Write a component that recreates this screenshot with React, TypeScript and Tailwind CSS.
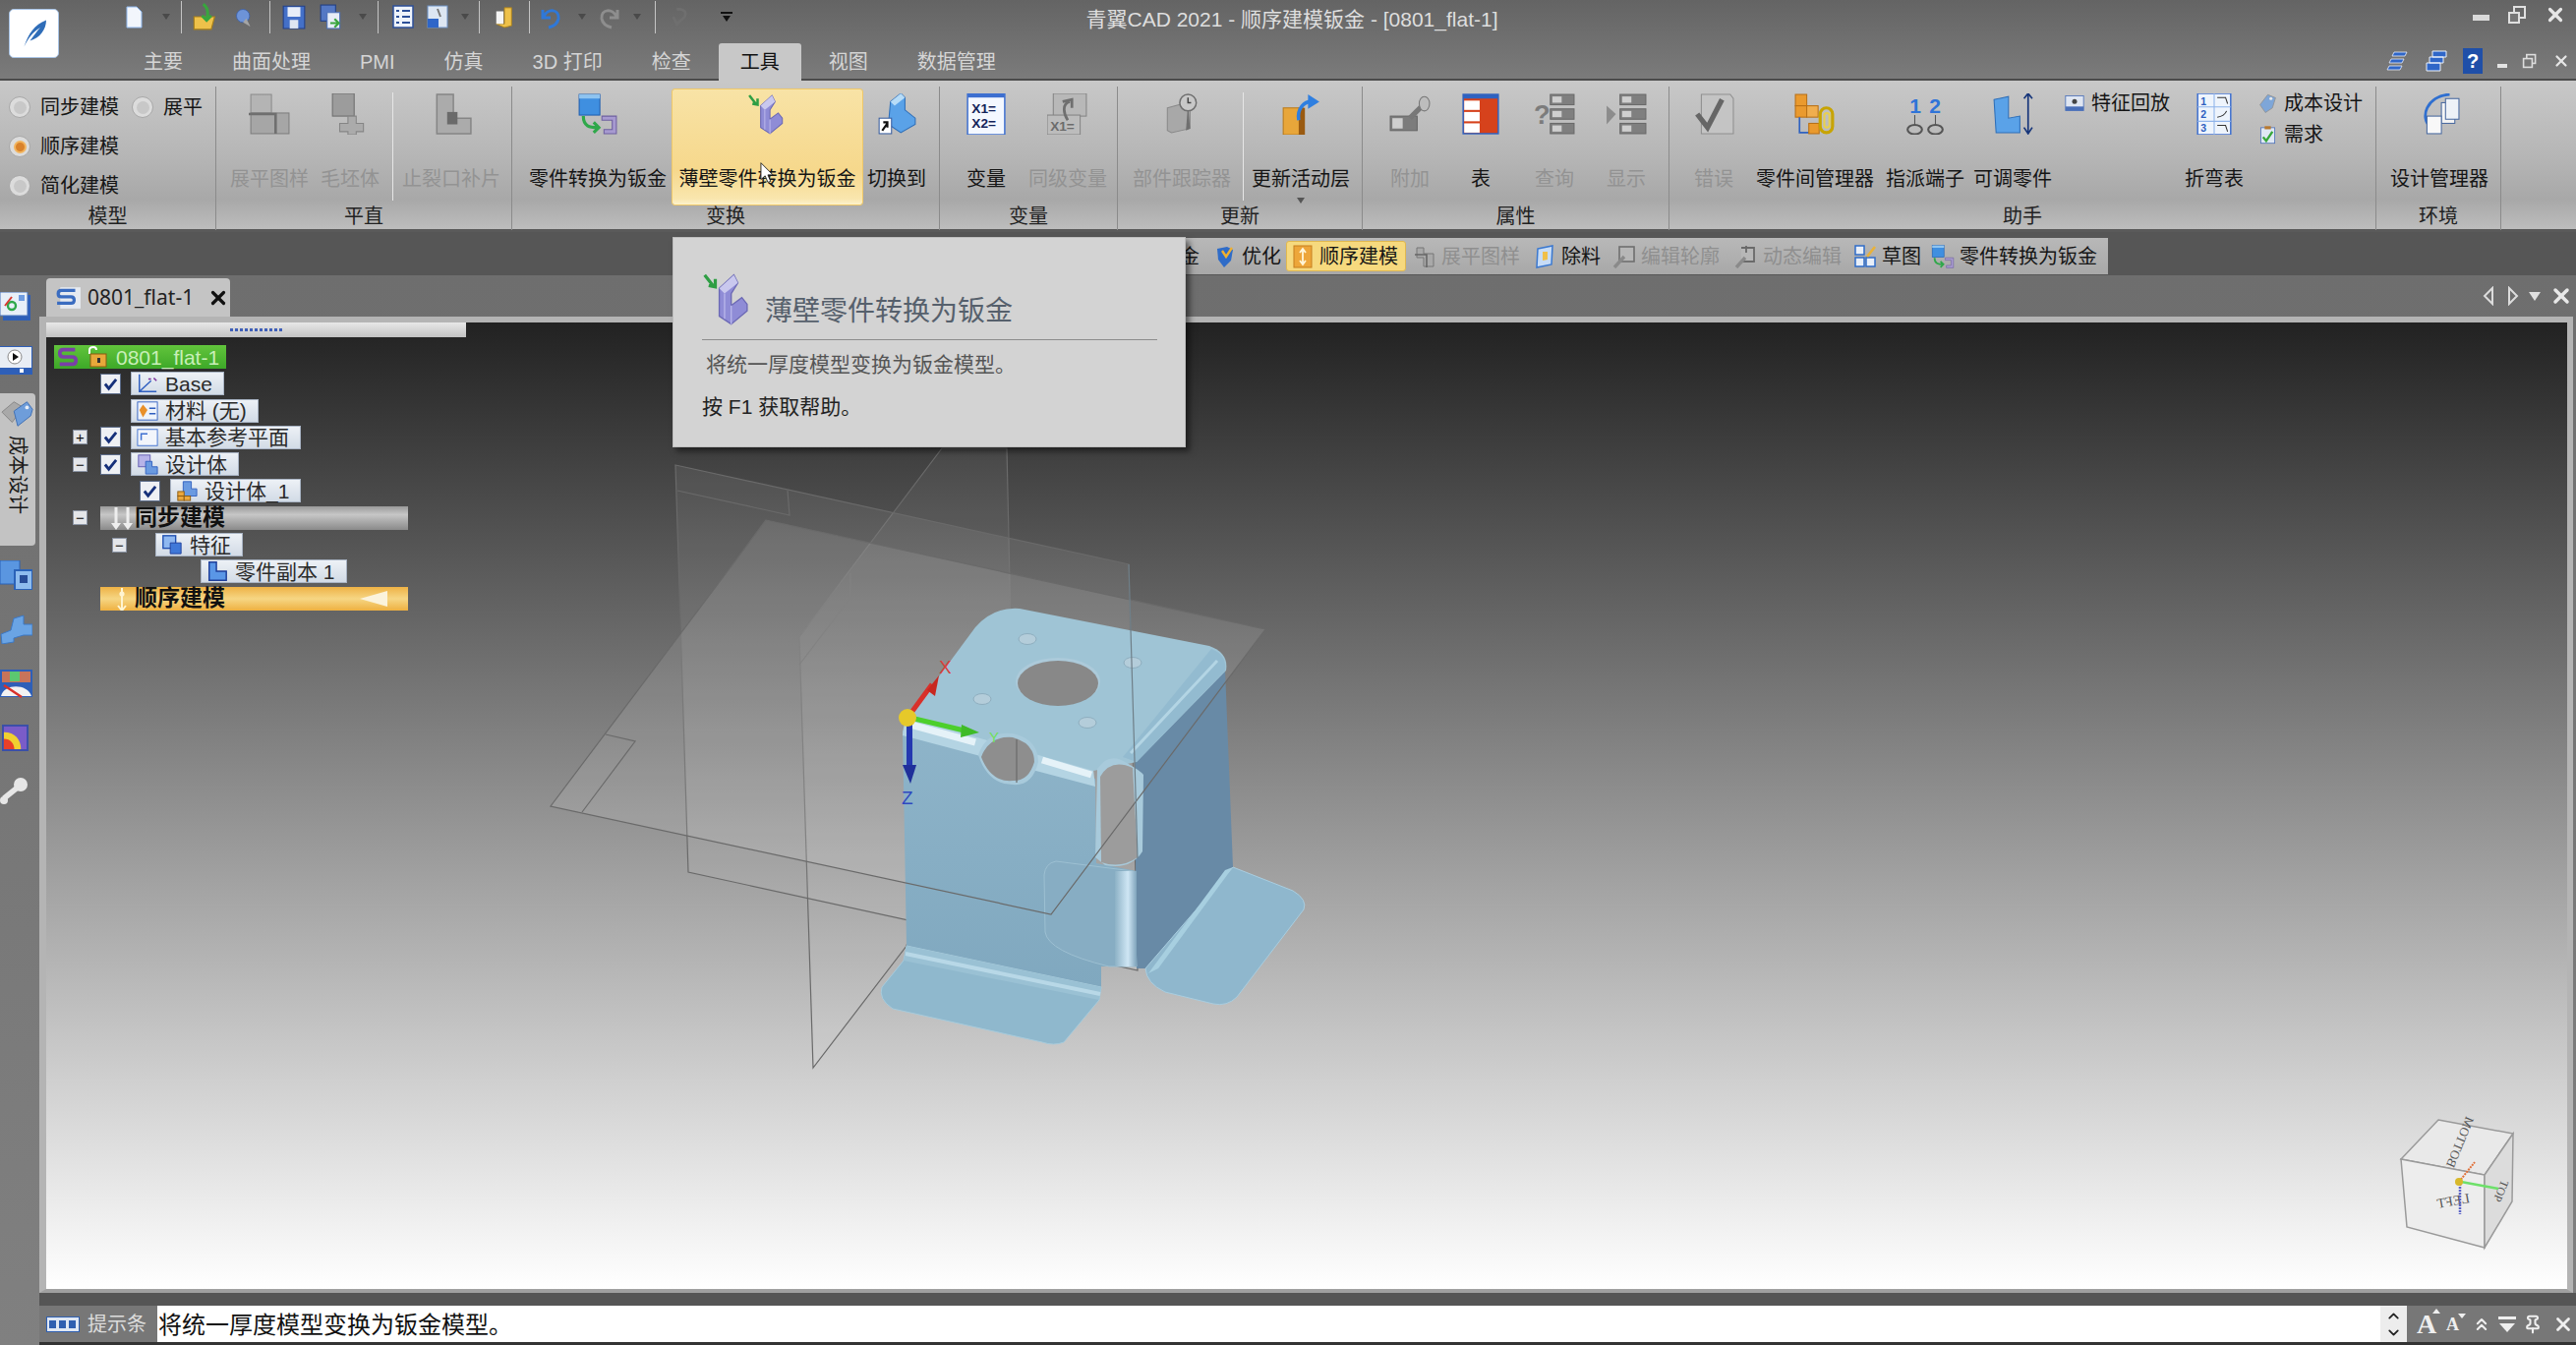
import type { ReactNode } from 'react'
import { ChevronUp, ChevronDown, ChevronsUp, Pin, X } from 'lucide-react'

const Svg = ({ s = 42, children }: { s?: number; children: ReactNode }) => (
  <svg viewBox="0 0 40 40" width={s} height={s} className="shrink-0">{children}</svg>
)

const ThinWall = ({ s = 42 }: { s?: number }) => (
  <Svg s={s}>
    <path d="M2 2 L9 11 M5 10 L10 11 L10 5" stroke="#2f9e44" strokeWidth="2.4" fill="none" />
    <path d="M13 12 L24 2 L27 8 L22 16 L22 25 L30 19 L34 24 L34 29 L22 39 L13 33 Z" fill="#8f8cd6" stroke="#6c69b5" strokeWidth="1" />
    <path d="M13 12 L24 2 L27 8 L17 16 Z" fill="#c9c8ee" />
    <path d="M17 16 L17 35 M22 25 L22 39" stroke="#b8b6ea" strokeWidth="1" />
  </Svg>
)

const PartToSheet = ({ s = 42 }: { s?: number }) => (
  <Svg s={s}>
    <rect x="2" y="1" width="20" height="20" fill="#3f8fe0" stroke="#1f5fb0" />
    <rect x="2" y="1" width="20" height="4" fill="#8fc4f0" />
    <path d="M6 22 C6 32 12 33 20 33 M16 28 L21 33 L16 38" stroke="#2fa84a" strokeWidth="3" fill="none" />
    <path d="M24 22 L38 22 L38 39 L26 39 L26 35 L34 35 L34 26 L24 26 Z" fill="#a79ad0" stroke="#6f60a0" />
  </Svg>
)

const Icons: Record<string, ReactNode> = {
  flat: (
    <Svg>
      <rect x="2" y="1" width="20" height="18" fill="#b4b4b4" stroke="#8c8c8c" />
      <rect x="2" y="19" width="37" height="20" fill="#a6a6a6" stroke="#7e7e7e" />
      <path d="M0 20 L26 20 L26 39" stroke="#6f6f6f" strokeWidth="2.5" fill="none" />
    </Svg>
  ),
  blank: (
    <Svg>
      <rect x="3" y="0" width="21" height="22" fill="#9c9c9c" stroke="#6e6e6e" />
      <path d="M18 22 h8 v7 h7 v8 h-7 v3 h-8 v-3 h-8 v-8 h8 z" fill="#ababab" stroke="#858585" />
    </Svg>
  ),
  relief: (
    <Svg>
      <path d="M6 1 L22 1 L22 24 L39 24 L39 39 L6 39 Z" fill="#ababab" stroke="#858585" strokeWidth="1.4" />
      <rect x="16" y="18" width="10" height="12" fill="#6a6a6a" />
    </Svg>
  ),
  part: <PartToSheet />,
  thin: <ThinWall />,
  switch: (
    <Svg>
      <path d="M14 8 L24 0 L28 4 L28 16 L38 24 L38 30 L24 38 L12 30 Z" fill="#5aa2e8" stroke="#2f6fb8" />
      <path d="M14 8 L24 0 L28 4 L18 12 Z" fill="#b7dcf7" />
      <rect x="3" y="24" width="12" height="15" fill="#fff" stroke="#3a5fa0" />
      <path d="M6 36 L11 29 M7 28 L11 28 L11 33" stroke="#111" strokeWidth="2" fill="none" />
    </Svg>
  ),
  vars: (
    <Svg>
      <rect x="2" y="0" width="36" height="40" fill="#f4f8ff" stroke="#3d6fd0" strokeWidth="1.4" />
      <rect x="2" y="0" width="36" height="4" fill="#3d6fd0" />
      <text x="6" y="19" fontSize="13" fontWeight="700" fill="#14245a" fontFamily="Liberation Sans">X1=</text>
      <text x="6" y="33" fontSize="13" fontWeight="700" fill="#14245a" fontFamily="Liberation Sans">X2=</text>
    </Svg>
  ),
  peer: (
    <Svg>
      <rect x="6" y="0" width="32" height="22" fill="#b8b8b8" stroke="#858585" />
      <rect x="0" y="21" width="32" height="19" fill="#bcbcbc" stroke="#858585" />
      <text x="3" y="36" fontSize="13" fontWeight="700" fill="#6c6c6c" fontFamily="Liberation Sans">X1=</text>
      <path d="M22 8 C14 10 16 20 20 26 M15 8 L24 6 L24 14" stroke="#6f6f6f" strokeWidth="2.6" fill="none" />
    </Svg>
  ),
  tracker: (
    <Svg>
      <path d="M6 14 L28 8 L28 34 L10 38 L6 36 Z" fill="#a8a8a8" stroke="#8a8a8a" />
      <path d="M26 10 L28 34 L24 36 Z" fill="#6f6f6f" />
      <circle cx="26" cy="9" r="8" fill="#c8c8c8" stroke="#6f6f6f" strokeWidth="1.4" />
      <path d="M26 4 V9 H29" stroke="#444" strokeWidth="1.4" fill="none" />
    </Svg>
  ),
  layer: (
    <Svg>
      <path d="M3 14 L22 14 L22 40 L3 40 Z" fill="#e8a63a" stroke="#b97a1a" />
      <rect x="18" y="14" width="6" height="26" fill="#9a5a10" />
      <path d="M18 26 C16 14 24 8 30 8" stroke="#2f7fe0" strokeWidth="3.4" fill="none" />
      <path d="M27 1 L38 8 L27 15 Z" fill="#2f7fe0" />
    </Svg>
  ),
  attach: (
    <Svg>
      <rect x="1" y="22" width="26" height="14" fill="#7c7c7c" stroke="#666" />
      <rect x="3" y="24" width="10" height="10" fill="#cfcfcf" />
      <path d="M20 24 L36 8" stroke="#777" strokeWidth="5" />
      <ellipse cx="34" cy="10" rx="5" ry="7" fill="#bdbdbd" stroke="#777" />
    </Svg>
  ),
  table: (
    <Svg>
      <rect x="3" y="1" width="34" height="38" fill="#d6421c" stroke="#2f62c0" strokeWidth="1.4" />
      <rect x="3" y="1" width="34" height="4" fill="#2f62c0" />
      <rect x="4" y="7" width="15" height="9" fill="#fff" />
      <rect x="4" y="18" width="15" height="9" fill="#fff" />
      <rect x="4" y="29" width="15" height="9" fill="#fff" />
    </Svg>
  ),
  query: (
    <Svg>
      <text x="0" y="30" fontSize="26" fontWeight="700" fill="#7c7c7c" fontFamily="Liberation Sans">?</text>
      {[1, 15, 29].map((y) => (
        <g key={y}>
          <rect x="16" y={y} width="23" height="10" fill="#7f7f7f" stroke="#696969" />
          <rect x="18" y={y + 2} width="9" height="6" fill="#cfcfcf" />
        </g>
      ))}
    </Svg>
  ),
  show: (
    <Svg>
      <path d="M1 12 L10 20 L1 30 Z" fill="#8c8c8c" />
      {[1, 15, 29].map((y) => (
        <g key={y}>
          <rect x="14" y={y} width="25" height="10" fill="#7f7f7f" stroke="#696969" />
          <rect x="16" y={y + 2} width="9" height="6" fill="#cfcfcf" />
        </g>
      ))}
    </Svg>
  ),
  error: (
    <Svg>
      <path d="M8 1 L36 1 L39 5 L39 39 L8 39 Z" fill="#c4c4c4" stroke="#8f8f8f" />
      <path d="M4 20 L14 33 L28 6" stroke="#666" strokeWidth="5" fill="none" />
    </Svg>
  ),
  inter: (
    <Svg>
      <rect x="1" y="1" width="11" height="11" fill="#ea9a2e" stroke="#b87016" />
      <rect x="1" y="12" width="11" height="11" fill="#ea9a2e" stroke="#b87016" />
      <rect x="12" y="12" width="11" height="11" fill="#f0ae4e" stroke="#b87016" />
      <path d="M5 23 V38 H16" stroke="#2f62c0" strokeWidth="1.6" fill="none" />
      <rect x="14" y="29" width="10" height="10" fill="#ea9a2e" stroke="#b87016" />
      <rect x="25" y="14" width="12" height="24" rx="6" fill="none" stroke="#c8a400" strokeWidth="3" />
      <rect x="29" y="19" width="5" height="14" rx="2.5" fill="none" stroke="#e8d050" strokeWidth="2" />
    </Svg>
  ),
  terminal: (
    <Svg>
      <text x="5" y="19" fontSize="20" fontWeight="700" fill="#2f74d8" fontFamily="Liberation Sans">1</text>
      <text x="24" y="19" fontSize="20" fontWeight="700" fill="#2f74d8" fontFamily="Liberation Sans">2</text>
      <path d="M10 21 V31 M30 21 V31" stroke="#555" strokeWidth="1" />
      <ellipse cx="10" cy="35" rx="7" ry="4.5" fill="none" stroke="#555" strokeWidth="2" />
      <ellipse cx="30" cy="35" rx="7" ry="4.5" fill="none" stroke="#555" strokeWidth="2" />
    </Svg>
  ),
  adjust: (
    <Svg>
      <path d="M2 6 L16 3 L16 24 L27 22 L27 38 L4 38 Z" fill="#5aa2e8" stroke="#2f6fb8" />
      <path d="M35 0 V38 M31 5 L35 0 L39 5 M31 33 L35 39 L39 33" stroke="#16357a" strokeWidth="1.6" fill="none" />
    </Svg>
  ),
  bend: (
    <Svg>
      <rect x="4" y="0" width="32" height="40" fill="#eef4fc" stroke="#3d6fd0" strokeWidth="1.4" />
      <path d="M4 13 H36 M4 27 H36 M20 0 V40" stroke="#8fb4ea" />
      <text x="7" y="11" fontSize="10" fontWeight="700" fill="#2f5fc0" fontFamily="Liberation Sans">1</text>
      <text x="7" y="24" fontSize="10" fontWeight="700" fill="#2f5fc0" fontFamily="Liberation Sans">2</text>
      <text x="7" y="37" fontSize="10" fontWeight="700" fill="#2f5fc0" fontFamily="Liberation Sans">3</text>
      <path d="M23 4 H31 L33 10 M23 23 Q30 22 32 17 M23 31 H31 L33 37" stroke="#333" fill="none" />
    </Svg>
  ),
  manager: (
    <Svg>
      <path d="M12 33 C0 24 8 2 30 1" stroke="#2f6fd0" strokeWidth="2.6" fill="none" />
      <rect x="22" y="9" width="13" height="20" fill="#f4f4f4" stroke="#4a6aa0" />
      <rect x="26" y="5" width="13" height="20" fill="#eef2f8" stroke="#4a6aa0" />
      <rect x="8" y="22" width="14" height="17" fill="#f8f8f8" stroke="#4a6aa0" />
    </Svg>
  ),
}

const Btn = ({ label, icon, off, cls, active }: { label: string; icon: string; off?: boolean; cls: string; active?: boolean }) => (
  <div className={`flex flex-col items-center h-[117px] pt-[4px] shrink-0 ${cls} ${active ? 'bg-[linear-gradient(180deg,#f8e3a6_0%,#f6d88c_70%,#f9e6ae_95%,#fdf2cc_100%)] outline outline-1 outline-[#efc869] rounded-[2px]' : ''}`}>
    <div className="h-[42px]">{Icons[icon]}</div>
    <div className={`mt-[31px] h-[28px] leading-[28px] text-[20px] whitespace-nowrap ${off ? 'text-[#939393]' : 'text-[#151515]'}`}>{label}</div>
  </div>
)

const Group = ({ cls, label, children }: { cls: string; label: string; children: ReactNode }) => (
  <div className={`flex flex-col shrink-0 mt-[6px] h-[146px] border-r border-[#8b8b8b] ${cls}`}>
    <div className="flex h-[116px] pt-[3px]">{children}</div>
    <div className="h-[26px] mt-[3px] leading-[26px] text-center text-[20px] text-[#222]">{label}</div>
  </div>
)

const Radio = ({ on }: { on?: boolean }) => (
  <span className="w-[22px] h-[22px] rounded-full bg-[#dcdcdc] border border-[#a8a8a8] flex items-center justify-center shrink-0">
    <span className={`w-[13px] h-[13px] rounded-full ${on ? 'bg-[#d9822b] border-2 border-[#f2b45e]' : 'bg-[#c8c8c8]'}`} />
  </span>
)

const Small = ({ icon, text }: { icon: ReactNode; text: string }) => (
  <div className="flex items-center h-[26px] gap-[7px] text-[20px] text-[#151515] whitespace-nowrap">
    {icon}
    {text}
  </div>
)

const Tool = ({ cls, icon, text, off }: { cls: string; icon: ReactNode; text: string; off?: boolean }) => (
  <div className={`flex items-center gap-[5px] text-[20px] whitespace-nowrap ${cls} ${off ? 'text-[#8f8f8f]' : 'text-[#151515]'}`}>
    <span className="w-[24px] h-[24px] shrink-0">{icon}</span>
    {text}
  </div>
)

const Chk = () => (
  <span className="w-[21px] h-[21px] bg-[#eef0f4] border border-[#5b6b88] flex items-center justify-center shrink-0">
    <svg viewBox="0 0 16 16" width="15" height="15"><path d="M2 8 L6 13 L14 3" stroke="#16307a" strokeWidth="3" fill="none" /></svg>
  </span>
)

const Exp = ({ plus }: { plus?: boolean }) => (
  <span className="w-[15px] h-[15px] bg-[#e4e6ea] border border-[#8a93a3] flex items-center justify-center text-[15px] leading-none text-[#111] shrink-0">
    {plus ? '+' : '−'}
  </span>
)

const TreeIcon = ({ kind }: { kind: string }) => (
  <svg viewBox="0 0 24 24" width="22" height="22" className="shrink-0">
    {kind === 'base' && <path d="M3 2 V21 H22 M3 21 L16 9" stroke="#2f5fc0" strokeWidth="1.6" fill="none" />}
    {kind === 'base' && <path d="M13 7 h3 M19 6 l3 3" stroke="#7a2f9a" strokeWidth="1.6" />}
    {kind === 'mat' && <><rect x="1" y="2" width="22" height="20" fill="#eef3fb" stroke="#2f5fc0" /><path d="M7 5 L12 11 L7 19 L3 11 Z" fill="#e8902a" /><path d="M14 9 h7 M14 15 h7" stroke="#2f5fc0" strokeWidth="1.6" /></>}
    {kind === 'plane' && <><rect x="1" y="3" width="22" height="18" fill="#f2f5fb" stroke="#3d6fd0" /><path d="M5 15 V8 H12" stroke="#3d6fd0" strokeWidth="1.6" fill="none" /></>}
    {kind === 'body' && <><rect x="2" y="2" width="13" height="13" fill="#b7b3e8" stroke="#5f5ab0" /><path d="M10 9 H17 V15 H23 V23 H10 Z" fill="#6a9ae0" stroke="#2f5fc0" /></>}
    {kind === 'body1' && <><path d="M8 2 H17 V10 H23 V18 H8 Z" fill="#6a9ae0" stroke="#2f5fc0" /><rect x="2" y="13" width="7" height="5" fill="#eba83e" stroke="#8a5a10" /><rect x="2" y="18" width="7" height="5" fill="#eba83e" stroke="#8a5a10" /><rect x="9" y="18" width="7" height="5" fill="#eba83e" stroke="#8a5a10" /></>}
    {kind === 'feat' && <><rect x="2" y="2" width="14" height="14" fill="#8fb8f0" stroke="#1f4fb0" strokeWidth="1.5" /><path d="M10 10 H22 V22 H10 Z" fill="#3f78d8" stroke="#1f3f9a" /></>}
    {kind === 'copy' && <path d="M3 2 H11 V12 H22 V22 H3 Z" fill="#5a96e6" stroke="#1f3f9a" strokeWidth="1.6" />}
  </svg>
)

const Label = ({ kind, text }: { kind: string; text: string }) => (
  <span className="flex items-center h-[24px] pl-[5px] pr-[11px] bg-[linear-gradient(180deg,#edf1f6,#d2dbe6)] border border-[#a9b4c4] text-[21px] leading-none text-[#2a2a2a] whitespace-nowrap">
    <span className="w-[29px] shrink-0"><TreeIcon kind={kind} /></span>
    {text}
  </span>
)

const Arrows = ({ fill }: { fill: string }) => (
  <svg viewBox="0 0 24 24" width="24" height="24" className="shrink-0">
    <path d="M12 1 V23 M8 19 L12 24 L16 19" stroke={fill} strokeWidth="2" fill="none" />
    <circle cx="12" cy="7" r="2.6" fill={fill} />
  </svg>
)

const SyncArrows = () => (
  <svg viewBox="0 0 24 24" width="24" height="24" className="shrink-0">
    <path d="M6 1 V19 M18 1 V19" stroke="#eeeeee" strokeWidth="3" />
    <path d="M1 17 L6 24 L11 17 Z M13 17 L18 24 L23 17 Z" fill="#eeeeee" />
  </svg>
)

const Page = ({ c1 = '#f2f6fc', c2 = '#8fb8ee' }: { c1?: string; c2?: string }) => (
  <svg viewBox="0 0 24 24" width="24" height="28">
    <path d="M5 2 H15 L20 7 V23 H5 Z" fill={c1} stroke={c2} />
  </svg>
)

const Qat = ({ cls, children }: { cls: string; children: ReactNode }) => (
  <div className={`shrink-0 h-[34px] flex items-center ${cls}`}>{children}</div>
)

const Sep = ({ cls }: { cls: string }) => <div className={`w-[1px] h-[33px] bg-[#c4c4c4] shrink-0 ${cls}`} />
const Dd = ({ cls }: { cls: string }) => (
  <span className={`w-0 h-0 shrink-0 border-x-[4px] border-x-transparent border-t-[6px] border-t-[#4a4a4a] ${cls}`} />
)

const Floppy = () => (
  <svg viewBox="0 0 24 24" width="26" height="28">
    <path d="M2 2 H22 V23 H2 Z" fill="#4470c8" stroke="#22408a" />
    <rect x="6" y="3" width="12" height="9" fill="#e8eef8" />
    <rect x="8" y="15" width="8" height="8" fill="#dfe6f2" />
  </svg>
)

const Viewport = () => (
  <svg viewBox="47 328 2564 983" className="absolute inset-0 w-full h-full">
    <defs>
      <linearGradient id="bend2" x1="0" y1="0" x2="1" y2="0">
        <stop offset="0" stopColor="#8db2c6" />
        <stop offset="0.6" stopColor="#cfe6f4" />
        <stop offset="1" stopColor="#7fa4bb" />
      </linearGradient>
      <linearGradient id="face" x1="0" y1="0" x2="0" y2="1">
        <stop offset="0" stopColor="#8eb4c9" />
        <stop offset="1" stopColor="#80a8bf" />
      </linearGradient>
    </defs>

    {/* back planes */}
    <path d="M958 456 L1024 456 L1028 640 L1000 680 L922 962 L827 1086 L813 648 Z" fill="rgba(255,255,255,0.05)" stroke="#6a6a6a" strokeWidth="1.2" />
    <path d="M865 583 L865 608 L813 676" fill="none" stroke="#6a6a6a" strokeWidth="1.2" />
    <path d="M687 473 L1148 574 L1157 987 L700 887 Z" fill="rgba(255,255,255,0.07)" stroke="#6a6a6a" strokeWidth="1.2" />
    <path d="M689 499 L803 524 L801 499" fill="none" stroke="#6a6a6a" strokeWidth="1.2" />
    <path d="M779 529 L1287 640 L1069 930 L560 820 Z" fill="rgba(255,255,255,0.1)" />

    {/* part */}
    <path d="M1154 772 L1246 680 L1254 882 L1180 985 L1156 985 Z" fill="#688aa6" />
    <path d="M1254 882 L1315 906 Q1330 915 1326 925 L1258 1014 Q1248 1024 1234 1021 L1185 1009 Q1166 1000 1165 985 Z" fill="#8fb7cd" stroke="#a9cddf" strokeWidth="1" />
    <path d="M1246 885 L1254 882 L1178 985 L1168 990 Z" fill="#a7cfe0" />
    <path d="M918 743 L1114 792 L1115 878 L1156 886 L1156 983 L1120 983 L1120 1004 L922 962 Z" fill="url(#face)" />
    <path d="M922 962 L1120 1004 L1118 1017 L1082 1060 Q1072 1064 1060 1060 L908 1026 Q893 1016 897 1004 L919 977 Z" fill="#8fb8cd" stroke="#a7cbdc" strokeWidth="1" />
    <path d="M922 962 L1120 1004 L1118 1017 L919 977 Z" fill="#9ac1d4" />
    <path d="M921 970 L1119 1011" stroke="#c6e3f0" strokeWidth="4" opacity="0.7" />
    <path d="M918 748 Q919 732 926 730 L1112 783 L1114 800 Z" fill="#b4d4e3" />
    <path d="M926 737 L992 755 M1060 773 L1110 788" stroke="#f2fafe" strokeWidth="7" opacity="0.8" />
    <path d="M924 730 L992 638 Q1010 617 1037 619 L1230 657 Q1250 664 1247 682 L1156 775 L1112 784 Z" fill="#9fc4d5" />
    <path d="M1232 660 Q1248 666 1246 682 L1156 775 L1142 770 Z" fill="#93bbd0" />
    <path d="M1238 672 L1150 766" stroke="#bcdcea" strokeWidth="3" opacity="0.8" />
    <path d="M1074 876 L1152 886 L1156 983 L1128 983 Q1066 968 1063 948 L1062 890 Q1063 878 1074 876 Z" fill="#87adc3" stroke="#9dc0d2" strokeWidth="1" />
    <rect x="1134" y="886" width="22" height="97" fill="url(#bend2)" />
    <path d="M1116 782 Q1128 764 1146 776 Q1160 784 1163 788 L1162 866 Q1150 885 1124 880 L1114 872 Z" fill="#a8cadb" />
    <path d="M1119 790 Q1130 771 1152 781 L1157 872 Q1140 884 1120 877 Z" fill="#9c9c9c" />
    <ellipse cx="1076" cy="693" rx="43" ry="24" fill="#accada" />
    <ellipse cx="1076" cy="695" rx="41" ry="23" fill="#888888" />
    <path d="M995 768 Q1003 743 1030 746 Q1056 752 1056 775 Q1050 800 1030 798 Q1005 798 995 768 Z" fill="#a8cadb" />
    <path d="M998 770 Q1006 748 1030 750 Q1052 756 1052 775 Q1046 795 1030 794 Q1008 796 998 770 Z" fill="#8e8e8e" />
    <path d="M1034 752 V796" stroke="#6a6a6a" strokeWidth="1.2" />
    {[[1045, 650], [1152, 674], [999, 711], [1106, 735]].map(([x, y]) => (
      <ellipse key={x} cx={x} cy={y} rx="9" ry="5.5" fill="#b4cdda" stroke="#8eaebf" />
    ))}

    {/* front plane edges */}
    <path d="M779 529 L1287 640 L1069 930 L560 820 Z" fill="none" stroke="#6a6a6a" strokeWidth="1.2" />
    <path d="M616 747 L646 754 L592 826" fill="none" stroke="#6a6a6a" strokeWidth="1.2" />
    <path d="M1148 574 L1157 873" stroke="#6f7f88" strokeWidth="1.2" />

    {/* triad */}
    <path d="M926 726 L948 696" stroke="#d8302a" strokeWidth="5" />
    <path d="M943 702 L955 687 L951 708 Z" fill="#c82820" />
    <path d="M926 730 L985 744" stroke="#4ccf2c" strokeWidth="5" />
    <path d="M978 737 L996 745 L977 750 Z" fill="#3fbb28" />
    <path d="M925 734 L925 782" stroke="#2438b0" strokeWidth="6" />
    <path d="M918 778 L932 778 L926 797 Z" fill="#1f2f9a" />
    <circle cx="923" cy="730" r="9" fill="#e6c92a" />
    <text x="955" y="685" fontSize="19" fill="#d8403a" fontFamily="Liberation Sans">X</text>
    <text x="1006" y="755" fontSize="15" fill="#6fe05a" fontFamily="Liberation Sans">Y</text>
    <text x="917" y="818" fontSize="19" fill="#2f48c0" fontFamily="Liberation Sans">Z</text>

    {/* view cube */}
    <path d="M2480 1139 L2556 1153 L2527 1195 L2442 1179 Z" fill="#e9e9e9" stroke="#9a9a9a" strokeWidth="1.5" />
    <path d="M2442 1179 L2527 1195 L2527 1269 L2448 1248 Z" fill="#ededed" stroke="#9a9a9a" strokeWidth="1.5" />
    <path d="M2556 1153 L2555 1222 L2527 1269 L2527 1195 Z" fill="#dcdcdc" stroke="#9a9a9a" strokeWidth="1.5" />
    <text transform="translate(2496 1226) scale(-1 1) rotate(10)" fontSize="14" fontFamily="Liberation Serif" fill="#555" textAnchor="middle">LEFT</text>
    <text transform="translate(2498 1160) rotate(112) scale(-1 1)" fontSize="13" fontFamily="Liberation Serif" fill="#555" textAnchor="middle">BOTTOM</text>
    <text transform="translate(2540 1210) rotate(112)" fontSize="12" fontFamily="Liberation Serif" fill="#555" textAnchor="middle">TOP</text>
    <path d="M2501 1202 L2517 1182" stroke="#e0703a" strokeWidth="2" strokeDasharray="2 1" />
    <path d="M2503 1202 L2541 1209" stroke="#6ee06a" strokeWidth="2.5" />
    <path d="M2502 1204 L2502 1235" stroke="#5a62c8" strokeWidth="2.5" strokeDasharray="2 1" />
    <circle cx="2501" cy="1202" r="4" fill="#d8b82a" />
  </svg>
)

export default function App() {
  return (
    <div className="relative w-[2620px] h-[1368px] overflow-hidden flex flex-col bg-[#707070] font-['Liberation_Sans','Noto_Sans_CJK_SC',sans-serif]">

      {/* TITLE + TABS */}
      <div className="relative h-[82px] shrink-0 bg-[linear-gradient(180deg,#646464,#7b7b7b)] border-b-2 border-[#4b4b4b]">
        <div className="flex items-center h-[34px]">
          <Qat cls="ml-[124px] w-[24px]"><Page /></Qat>
          <Dd cls="ml-[17px]" />
          <Sep cls="ml-[11px]" />
          <Qat cls="ml-[10px] w-[28px]">
            <svg viewBox="0 0 24 24" width="28" height="28"><path d="M2 12 H20 L17 23 H2 Z" fill="#eec14a" stroke="#a8801c" /><path d="M10 1 C14 4 15 8 13 14 M9 11 L13 15 L17 11" stroke="#39a53e" strokeWidth="2.6" fill="none" /></svg>
          </Qat>
          <Qat cls="ml-[15px] w-[20px]">
            <svg viewBox="0 0 24 24" width="20" height="26"><circle cx="11" cy="11" r="8" fill="#6d93d8" stroke="#3c60a8" /><path d="M11 19 L20 24 L15 14" fill="#a5a5a5" /></svg>
          </Qat>
          <Sep cls="ml-[16px]" />
          <Qat cls="ml-[11px] w-[26px]"><Floppy /></Qat>
          <Qat cls="ml-[12px] w-[26px]">
            <svg viewBox="0 0 24 24" width="26" height="30"><rect x="2" y="1" width="14" height="15" fill="#5478c4" stroke="#223f85" /><path d="M8 8 H20 V23 H8 Z" fill="#e7edf7" stroke="#4a6fb8" /><path d="M11 18 H18 M15 14 L19 18 L15 22" stroke="#3aa53e" strokeWidth="2" fill="none" /></svg>
          </Qat>
          <Dd cls="ml-[15px]" />
          <Sep cls="ml-[11px]" />
          <Qat cls="ml-[13px] w-[24px]">
            <svg viewBox="0 0 24 24" width="24" height="26"><rect x="2" y="1" width="20" height="22" fill="#eef3fa" stroke="#2c4f98" strokeWidth="1.5" /><path d="M5 6 h3 M11 6 h8 M5 12 h3 M11 12 h8 M5 18 h3 M11 18 h8" stroke="#2c4f98" strokeWidth="2" /></svg>
          </Qat>
          <Qat cls="ml-[11px] w-[26px]">
            <svg viewBox="0 0 24 24" width="24" height="30"><rect x="2" y="1" width="20" height="22" fill="#dde6f2" stroke="#6f93c8" /><rect x="2" y="14" width="11" height="9" fill="#2f66c8" /><path d="M12 4 l3 8" stroke="#777" strokeWidth="2" /></svg>
          </Qat>
          <Dd cls="ml-[10px]" />
          <Sep cls="ml-[10px]" />
          <Qat cls="ml-[14px] w-[22px]">
            <svg viewBox="0 0 24 24" width="22" height="30"><path d="M3 20 H12 V2 H20 V22 L12 24 Z" fill="#eec14a" stroke="#a8801c" /><rect x="3" y="6" width="8" height="14" fill="#f5f5f5" /></svg>
          </Qat>
          <Sep cls="ml-[14px]" />
          <Qat cls="ml-[9px] w-[24px]">
            <svg viewBox="0 0 24 24" width="26" height="30"><path d="M4 5 V13 H12 M5 12 C9 3 21 4 20 14 C19 20 14 22 10 23" stroke="#2f78d8" strokeWidth="3" fill="none" /></svg>
          </Qat>
          <Dd cls="ml-[16px]" />
          <Qat cls="ml-[12px] w-[24px]">
            <svg viewBox="0 0 24 24" width="26" height="30"><path d="M20 5 V13 H12 M19 12 C15 3 3 4 4 14 C5 20 10 22 14 23" stroke="#8e8e8e" strokeWidth="3" fill="none" /></svg>
          </Qat>
          <Dd cls="ml-[12px]" />
          <Sep cls="ml-[14px]" />
          <Qat cls="ml-[14px] w-[22px]">
            <svg viewBox="0 0 24 24" width="22" height="28"><path d="M8 4 C16 2 20 8 16 13 L8 20 M4 12 L9 22" stroke="#6f6f6f" strokeWidth="3" fill="none" /></svg>
          </Qat>
          <div className="ml-[30px] flex flex-col items-center gap-[2px] shrink-0">
            <span className="w-[12px] h-[2px] bg-[#111]" />
            <Dd cls="!border-t-[#111]" />
          </div>
        </div>

        <div className="absolute left-0 right-0 top-0 h-[40px] flex items-center justify-center pl-[8px] text-[21px] text-[#dedede] pointer-events-none whitespace-nowrap">
          青翼CAD 2021 - 顺序建模钣金 - [0801_flat-1]
        </div>

        {/* logo */}
        <div className="absolute left-[9px] top-[9px] w-[51px] h-[50px] rounded-[5px] bg-white border border-[#a9c4e6] flex items-center justify-center">
          <svg viewBox="0 0 24 24" width="36" height="36"><path d="M5 21 C8 12 12 6 20 3 C20 9 16 15 9 17 C12 13 14 10 16 8 C11 11 8 15 5 21 Z" fill="#2f6db8" /></svg>
        </div>

        {/* window buttons */}
        <div className="absolute right-[10px] top-[4px] flex items-center gap-[18px] text-[#e6e6e6]">
          <span className="w-[17px] h-[6px] mt-[6px] bg-[#d9d9d9]" />
          <svg viewBox="0 0 20 20" width="20" height="22"><rect x="7" y="2" width="11" height="11" fill="none" stroke="#e0e0e0" strokeWidth="2" /><rect x="2" y="8" width="10" height="10" fill="#777" stroke="#e0e0e0" strokeWidth="2" /></svg>
          <X size={22} strokeWidth={3.5} />
        </div>

        {/* tabs */}
        <div className="absolute left-[121px] top-[44px] h-[38px] flex text-[20px] leading-[38px] text-[#d5d5d5]">
          {['主要', '曲面处理', 'PMI', '仿真', '3D 打印', '检查'].map((t) => (
            <div key={t} className="px-[25px] whitespace-nowrap">{t}</div>
          ))}
          <div className="mx-[3px] px-[22px] h-[40px] bg-[#c8c8c8] rounded-t-[3px] text-[#111]">工具</div>
          {['视图', '数据管理'].map((t) => (
            <div key={t} className="px-[25px] whitespace-nowrap">{t}</div>
          ))}
        </div>

        <div className="absolute right-[6px] top-[49px] flex items-center gap-[15px]">
          <svg viewBox="0 0 24 24" width="24" height="24"><path d="M8 3 H21 L19 7 H6 Z M5 10 H18 L16 14 H3 Z M3 17 H16 L14 21 H1 Z" fill="#2f66c8" stroke="#e8eefa" strokeWidth="0.8" /></svg>
          <svg viewBox="0 0 24 24" width="24" height="24"><path d="M8 2 H22 V8 H8 Z M5 8 H19 V14 H5 Z M2 14 H16 V22 H2 Z" fill="#2f66c8" stroke="#eef3fb" strokeWidth="1" /></svg>
          <div className="w-[20px] h-[26px] bg-[#1f4fa8] text-white text-[20px] font-bold leading-[26px] text-center">?</div>
          <span className="w-[10px] h-[4px] mt-[10px] bg-[#e4e4e4]" />
          <svg viewBox="0 0 20 20" width="16" height="18"><rect x="6" y="2" width="11" height="11" fill="none" stroke="#ddd" strokeWidth="2" /><rect x="2" y="7" width="11" height="11" fill="#777" stroke="#ddd" strokeWidth="2" /></svg>
          <X size={18} strokeWidth={3} className="text-[#e6e6e6]" />
        </div>
      </div>

      {/* RIBBON */}
      <div className="flex h-[154px] shrink-0 bg-[linear-gradient(180deg,#c8c8c8_0%,#b6b6b6_50%,#a8a8a8_80%,#bdbdbd_100%)] border-b-[3px] border-[#5a5a5a]">
        <Group cls="w-[220px]" label="模型">
          <div className="flex flex-col -mt-[2px] text-[20px] text-[#151515]">
            <div className="flex items-center shrink-0 h-[40px] pl-[9px]"><Radio /><span className="ml-[10px] whitespace-nowrap">同步建模</span><span className="ml-[13px]"><Radio /></span><span className="ml-[10px]">展平</span></div>
            <div className="flex items-center shrink-0 h-[40px] pl-[9px]"><Radio on /><span className="ml-[10px]">顺序建模</span></div>
            <div className="flex items-center shrink-0 h-[40px] pl-[9px]"><Radio /><span className="ml-[10px]">简化建模</span></div>
          </div>
        </Group>
        <Group cls="w-[301px]" label="平直">
          <Btn off label="展平图样" icon="flat" cls="ml-[10px] w-[88px]" />
          <Btn off label="毛坯体" icon="blank" cls="w-[76px]" />
          <div className="w-px h-[110px] ml-[5px] mt-[3px] bg-[#e6e6e6]" />
          <Btn off label="止裂口补片" icon="relief" cls="w-[118px]" />
        </Group>
        <Group cls="w-[435px]" label="变换">
          <Btn label="零件转换为钣金" icon="part" cls="ml-[15px] w-[144px]" />
          <Btn active label="薄壁零件转换为钣金" icon="thin" cls="ml-[4px] w-[193px]" />
          <Btn label="切换到" icon="switch" cls="ml-[5px] w-[60px]" />
        </Group>
        <Group cls="w-[181px]" label="变量">
          <Btn label="变量" icon="vars" cls="ml-[17px] w-[60px]" />
          <Btn off label="同级变量" icon="peer" cls="ml-[11px] w-[84px]" />
        </Group>
        <Group cls="w-[249px]" label="更新">
          <Btn off label="部件跟踪器" icon="tracker" cls="ml-[13px] w-[104px]" />
          <div className="w-px h-[110px] ml-[10px] mt-[3px] bg-[#e6e6e6]" />
          <div className="relative ml-[6px]">
            <Btn label="更新活动层" icon="layer" cls="w-[104px]" />
            <span className="absolute left-[48px] top-[110px] w-0 h-0 border-x-[4px] border-x-transparent border-t-[6px] border-t-[#555]" />
          </div>
        </Group>
        <Group cls="w-[312px]" label="属性">
          <Btn off label="附加" icon="attach" cls="ml-[18px] w-[60px]" />
          <Btn label="表" icon="table" cls="ml-[12px] w-[60px]" />
          <Btn off label="查询" icon="query" cls="ml-[15px] w-[60px]" />
          <Btn off label="显示" icon="show" cls="ml-[13px] w-[60px]" />
        </Group>
        <Group cls="w-[719px]" label="助手">
          <Btn off label="错误" icon="error" cls="ml-[15px] w-[60px]" />
          <Btn label="零件间管理器" icon="inter" cls="ml-[12px] w-[122px]" />
          <Btn label="指派端子" icon="terminal" cls="ml-[10px] w-[82px]" />
          <Btn label="可调零件" icon="adjust" cls="ml-[8px] w-[80px]" />
          <div className="ml-[13px] w-[108px] pt-[1px]">
            <Small
              text="特征回放"
              icon={<svg viewBox="0 0 24 24" width="20" height="24"><rect x="1" y="3" width="22" height="18" fill="#dfe6f2" stroke="#4a6fb8" /><rect x="1" y="16" width="22" height="5" fill="#4a6fb8" /><circle cx="12" cy="10" r="3" fill="#444" /></svg>}
            />
          </div>
          <Btn label="折弯表" icon="bend" cls="ml-[13px] w-[62px]" />
          <div className="ml-[14px] flex flex-col gap-[6px] pt-[1px]">
            <Small
              text="成本设计"
              icon={<svg viewBox="0 0 24 24" width="19" height="26"><path d="M12 1 L22 5 L18 18 L9 24 L2 14 Z" fill="#7ea6d8" stroke="#8f8f8f" /><circle cx="16" cy="6" r="2" fill="#e8e8e8" /></svg>}
            />
            <Small
              text="需求"
              icon={<svg viewBox="0 0 24 24" width="19" height="26"><rect x="3" y="3" width="18" height="20" fill="#dfe8f4" stroke="#4a6fb8" /><rect x="8" y="1" width="8" height="4" fill="#b87a30" /><path d="M6 15 L10 20 L18 8" stroke="#38a83c" strokeWidth="3" fill="none" /></svg>}
            />
          </div>
        </Group>
        <Group cls="w-[127px]" label="环境">
          <Btn label="设计管理器" icon="manager" cls="ml-[12px] w-[104px]" />
        </Group>
      </div>

      {/* SECONDARY TOOLBAR */}
      <div className="h-[44px] shrink-0 bg-[#565656] pt-[6px]">
        <div className="ml-[1100px] w-[1044px] h-[37px] flex items-center bg-[linear-gradient(180deg,#b8b8b8,#a8a8a8)]">
          <div className="w-[120px] text-right text-[20px] text-[#151515]">钣金</div>
          <Tool
            cls="ml-[14px]"
            text="优化"
            icon={<svg viewBox="0 0 24 24" width="24" height="24"><path d="M4 4 L14 2 L20 5 L18 16 L11 23 L5 15 Z" fill="#2f6cc8" /><path d="M9 6 L13 12 L19 3" stroke="#f0b030" strokeWidth="2.4" fill="none" /></svg>}
          />
          <div className="ml-[5px] pl-[4px] pr-[7px] h-[31px] flex items-center bg-[#f6d97e] border border-[#e0b850] rounded-[3px]">
            <Tool
              cls=""
              text="顺序建模"
              icon={<svg viewBox="0 0 24 24" width="24" height="24"><rect x="3" y="1" width="18" height="22" fill="#eda63a" stroke="#c57f1e" /><path d="M12 4 V20 M9 8 L12 4 L15 8 M9 16 L12 20 L15 16" stroke="#fff5d8" strokeWidth="1.8" fill="none" /></svg>}
            />
          </div>
          <Tool
            off
            cls="ml-[7px]"
            text="展平图样"
            icon={<svg viewBox="0 0 24 24" width="24" height="24"><path d="M4 3 H11 V9 H21 V22 H11 V13 H4 Z" fill="#a9a9a9" stroke="#777" /><path d="M2 10 H14 V23" stroke="#666" strokeWidth="1.6" fill="none" /></svg>}
          />
          <Tool
            cls="ml-[13px]"
            text="除料"
            icon={<svg viewBox="0 0 24 24" width="24" height="24"><path d="M5 4 L20 1 L19 20 L4 23 Z" fill="#c7dcf6" stroke="#3a78d0" strokeWidth="1.5" /><path d="M10 7 H15 V15 L10 16 Z" fill="#f0c04a" /></svg>}
          />
          <Tool
            off
            cls="ml-[12px]"
            text="编辑轮廓"
            icon={<svg viewBox="0 0 24 24" width="24" height="24"><rect x="7" y="2" width="15" height="15" fill="#b7b7b7" stroke="#6f6f6f" strokeWidth="1.6" /><path d="M2 23 L12 12" stroke="#8a8a8a" strokeWidth="3.4" /></svg>}
          />
          <Tool
            off
            cls="ml-[15px]"
            text="动态编辑"
            icon={<svg viewBox="0 0 24 24" width="24" height="24"><path d="M7 3 H20 V17 H7 M12 1 V8" fill="#b7b7b7" stroke="#6a6a6a" strokeWidth="1.8" /><path d="M2 23 L11 13" stroke="#8a8a8a" strokeWidth="3.4" /></svg>}
          />
          <Tool
            cls="ml-[12px]"
            text="草图"
            icon={<svg viewBox="0 0 24 24" width="24" height="24"><rect x="2" y="1" width="9" height="9" fill="#e8eff9" stroke="#2f6cc8" strokeWidth="1.5" /><rect x="2" y="13" width="9" height="9" fill="#e8eff9" stroke="#2f6cc8" strokeWidth="1.5" /><rect x="13" y="13" width="9" height="9" fill="#e8eff9" stroke="#2f6cc8" strokeWidth="1.5" /><path d="M14 12 L22 2" stroke="#e9b23a" strokeWidth="2.6" /></svg>}
          />
          <Tool cls="ml-[10px]" text="零件转换为钣金" icon={<PartToSheet s={24} />} />
        </div>
      </div>

      {/* MAIN */}
      <div className="flex flex-1 min-h-0 bg-[linear-gradient(180deg,#6e6e6e,#808080)]">

        {/* LEFT STRIP */}
        <div className="w-[40px] shrink-0 flex flex-col items-start pt-[17px]">
          <svg viewBox="0 0 32 30" width="32" height="30"><rect x="3" y="3" width="28" height="26" fill="#2e5fb8" /><rect x="0" y="0" width="28" height="24" fill="#e8eff8" stroke="#4a74bc" /><circle cx="12" cy="14" r="4" fill="none" stroke="#2fa84a" strokeWidth="2.4" /><path d="M5 14 L12 5" stroke="#d83a30" strokeWidth="2" /><rect x="19" y="3" width="6" height="6" fill="#6f9ce0" /></svg>
          <div className="mt-[25px]">
            <svg viewBox="0 0 33 30" width="33" height="30"><rect x="0" y="0" width="33" height="29" fill="#2e5fb8" /><rect x="0" y="1" width="32" height="21" fill="#e8edf4" /><circle cx="15" cy="11" r="7" fill="#fff" stroke="#888" /><path d="M13 7 L19 11 L13 15 Z" fill="#111" /><rect x="20" y="23" width="4" height="4" fill="#fff" /></svg>
          </div>
          <div className="mt-[18px] w-[36px] h-[155px] bg-[#c3c3c3] rounded-r-[4px] flex flex-col items-center pt-[6px]">
            <svg viewBox="0 0 36 30" width="34" height="30"><path d="M1 13 L14 2 L24 8 L12 24 Z" fill="#a9a9a9" stroke="#868686" /><path d="M14 12 L28 2 L34 10 L32 17 L18 28 Z" fill="#6e9dda" stroke="#3f6eb4" /><circle cx="28" cy="8" r="2" fill="#e8eef8" /></svg>
            <div className="mt-[7px] [writing-mode:vertical-rl] [text-orientation:sideways] text-[20px] leading-none text-[#1a1a1a]">成本设计</div>
          </div>
          <div className="mt-[15px]">
            <svg viewBox="0 0 33 30" width="33" height="30"><rect x="0" y="0" width="20" height="24" fill="#5a96e0" stroke="#2a62b8" /><rect x="15" y="10" width="18" height="20" fill="#8ebcee" stroke="#2a62b8" strokeWidth="2" /><rect x="20" y="15" width="8" height="8" fill="#274d98" /></svg>
          </div>
          <div className="mt-[25px]">
            <svg viewBox="0 0 33 30" width="33" height="30"><path d="M14 4 L24 1 L24 10 L33 10 L33 21 L24 21 L14 24 L14 28 L2 30 L1 20 L11 16 Z" fill="#6aa4e4" stroke="#3d78c4" /></svg>
          </div>
          <div className="mt-[26px]">
            <svg viewBox="0 0 33 30" width="33" height="30"><rect x="0" y="0" width="33" height="28" fill="#2e5fb8" /><path d="M2 2 H31 V13 H2 Z" fill="#c8745a" /><path d="M10 2 H20 V12 H10 Z" fill="#5cc870" /><path d="M1 27 C4 14 28 14 32 27 Z" fill="#f2f2f2" /><path d="M4 16 L22 28" stroke="#d8302a" strokeWidth="2.4" /></svg>
          </div>
          <div className="mt-[26px] ml-[2px]">
            <svg viewBox="0 0 28 28" width="27" height="27"><rect x="0" y="0" width="28" height="28" fill="#3a4fa8" /><rect x="2" y="2" width="24" height="24" fill="#7a5cc8" /><path d="M2 26 V8 C14 8 20 16 20 26 Z" fill="#f0d030" /><path d="M2 26 V15 C9 15 13 20 13 26 Z" fill="#e84028" /></svg>
          </div>
          <div className="mt-[26px]">
            <svg viewBox="0 0 30 30" width="30" height="30"><circle cx="21" cy="8" r="7" fill="#e6e6e6" /><path d="M19 10 L4 22" stroke="#e6e6e6" strokeWidth="5.5" /><circle cx="4" cy="24" r="4" fill="#e6e6e6" /></svg>
          </div>
        </div>

        <div className="flex-1 min-w-0 flex flex-col">

          {/* DOC TAB */}
          <div className="h-[42px] shrink-0 flex items-end relative">
            <div className="ml-[7px] w-[187px] h-[39px] bg-[#c4c4c4] rounded-t-[4px] flex items-center pl-[10px]">
              <svg viewBox="0 0 24 24" width="26" height="28" className="shrink-0"><rect x="4" y="2" width="19" height="20" fill="#e6eaf0" /><path d="M18 5 H5 Q2 5 2 8 Q2 11 5 11 H14 Q17 11 17 14 Q17 17 14 17 H1" stroke="#3a6cc0" strokeWidth="3" fill="none" /></svg>
              <span className="ml-[6px] text-[21px] text-[#222] font-['Noto_Sans',sans-serif]">0801_flat-1</span>
              <X size={22} strokeWidth={3.5} className="ml-[14px] text-[#111]" />
            </div>
            <div className="absolute right-[3px] top-[9px] flex items-center text-[#d8d8d8]">
              <svg viewBox="0 0 12 20" width="12" height="20"><path d="M10 2 L2 10 L10 18 Z" fill="none" stroke="#dcdcdc" strokeWidth="2" /></svg>
              <svg viewBox="0 0 12 20" width="12" height="20" className="ml-[13px]"><path d="M2 2 L10 10 L2 18 Z" fill="none" stroke="#dcdcdc" strokeWidth="2" /></svg>
              <span className="ml-[10px] w-0 h-0 border-x-[6px] border-x-transparent border-t-[9px] border-t-[#e0e0e0]" />
              <X size={24} strokeWidth={3.5} className="ml-[9px] text-[#e8e8e8]" />
            </div>
          </div>

          {/* VIEWPORT */}
          <div className="flex-1 min-h-0 mr-[3px] border-x-[7px] border-t-[6px] border-b-[4px] border-[#b4b4b4] border-b-[#a0a0a0]">
            <div className="relative w-[2564px] h-[983px] overflow-hidden bg-[linear-gradient(180deg,#222222,#ffffff)]">
              <Viewport />

              {/* TREE */}
              <div className="relative w-[427px]">
                <div className="h-[15px] bg-[linear-gradient(180deg,#e8e8e8,#c2c2c2)] flex items-center justify-center gap-[2px]">
                  {Array.from({ length: 11 }).map((_, i) => (
                    <span key={i} className="w-[3px] h-[3px] bg-[#3f5fb8]" />
                  ))}
                </div>
                <div className="flex flex-col gap-[3.3px] mt-[8px]">
                  <div className="flex items-center h-6 ml-[8px] w-[175px] bg-[linear-gradient(180deg,#62c43c,#3da828)] text-[21px] text-[#c8efb8] leading-none">
                    <svg viewBox="0 0 24 24" width="24" height="22" className="ml-[2px] shrink-0"><path d="M20 4 H7 Q3 4 3 8 Q3 12 7 12 H17 Q21 12 21 16 Q21 20 17 20 H3" stroke="#7a3fa8" strokeWidth="4" fill="none" /></svg>
                    <svg viewBox="0 0 24 24" width="24" height="24" className="ml-[6px] shrink-0"><path d="M4 9 V5 Q4 2 8 2 Q11 2 11 5" stroke="#fff" strokeWidth="2" fill="none" /><rect x="5" y="9" width="16" height="13" fill="#e8a83a" stroke="#8a5a10" /><rect x="12" y="13" width="3" height="5" fill="#333" /></svg>
                    <span className="ml-[7px]">0801_flat-1</span>
                  </div>
                  <div className="flex items-center h-6 pl-[55px]"><Chk /><span className="ml-[10px]"><Label kind="base" text="Base" /></span></div>
                  <div className="flex items-center h-6 pl-[86px]"><Label kind="mat" text="材料 (无)" /></div>
                  <div className="flex items-center h-6 pl-[27px]"><Exp plus /><span className="ml-[13px]"><Chk /></span><span className="ml-[10px]"><Label kind="plane" text="基本参考平面" /></span></div>
                  <div className="flex items-center h-6 pl-[27px]"><Exp /><span className="ml-[13px]"><Chk /></span><span className="ml-[10px]"><Label kind="body" text="设计体" /></span></div>
                  <div className="flex items-center h-6 pl-[95px]"><Chk /><span className="ml-[10px]"><Label kind="body1" text="设计体_1" /></span></div>
                  <div className="flex items-center h-6 pl-[27px]">
                    <Exp />
                    <div className="ml-[13px] w-[313px] h-6 flex items-center pl-[10px] bg-[linear-gradient(180deg,#9a9a9a,#c6c6c6_35%,#8a8a8a)] text-[23px] font-bold leading-none text-[#111]">
                      <SyncArrows />
                      <span className="ml-[1px]">同步建模</span>
                    </div>
                  </div>
                  <div className="flex items-center h-6 pl-[67px]"><Exp /><span className="ml-[29px]"><Label kind="feat" text="特征" /></span></div>
                  <div className="flex items-center h-6 pl-[157px]"><Label kind="copy" text="零件副本 1" /></div>
                  <div className="flex items-center h-6 pl-[55px]">
                    <div className="w-[313px] h-6 flex items-center pl-[10px] bg-[linear-gradient(180deg,#eeb245,#f6d684_50%,#eeb040)] text-[23px] font-bold leading-none text-[#111]">
                      <Arrows fill="#fff4d0" />
                      <span className="ml-[1px]">顺序建模</span>
                      <svg viewBox="0 0 28 16" width="28" height="16" className="ml-[137px]"><path d="M0 8 L28 0 V16 Z" fill="#fbf3dc" /></svg>
                    </div>
                  </div>
                </div>
              </div>
            </div>
          </div>

          {/* STATUS */}
          <div className="h-[13px] shrink-0 bg-[#555555]" />
          <div className="h-[37px] shrink-0 flex items-center bg-[#777777]">
            <svg viewBox="0 0 34 16" width="34" height="16" className="ml-[7px] shrink-0"><rect x="0.5" y="0.5" width="33" height="15" fill="#dfe7f3" stroke="#2f5fb0" /><rect x="3" y="4" width="7" height="8" fill="#2f5fb0" /><rect x="13" y="4" width="7" height="8" fill="#2f5fb0" /><rect x="23" y="4" width="7" height="8" fill="#2f5fb0" /></svg>
            <span className="ml-[8px] w-[71px] text-[20px] text-[#dcdcdc] whitespace-nowrap">提示条</span>
            <div className="w-[2288px] h-[37px] shrink-0 bg-white flex items-center justify-between">
              <span className="pl-[1px] pt-[3px] text-[24px] leading-none text-[#111]">将统一厚度模型变换为钣金模型。</span>
              <span className="w-[27px] h-full bg-[#ededed] flex flex-col items-center justify-center text-[#222]">
                <ChevronUp size={17} strokeWidth={2.5} />
                <ChevronDown size={17} strokeWidth={2.5} />
              </span>
            </div>
            <div className="flex items-center ml-[10px] gap-[6px] text-[#efefef]">
              <span className="relative w-[24px] text-[28px] font-bold leading-none font-['Liberation_Serif',serif]">
                A
                <span className="absolute right-0 -top-[2px] w-0 h-0 border-x-[4px] border-x-transparent border-b-[5px] border-b-[#efefef]" />
              </span>
              <span className="relative w-[20px] text-[18px] font-bold leading-none font-['Liberation_Serif',serif]">
                A
                <span className="absolute right-0 -top-[2px] w-0 h-0 border-x-[4px] border-x-transparent border-t-[5px] border-t-[#efefef]" />
              </span>
              <ChevronsUp size={20} strokeWidth={2.5} />
              <svg viewBox="0 0 20 20" width="20" height="20"><rect x="1" y="2" width="18" height="3" fill="#efefef" /><path d="M2 9 H18 L10 18 Z" fill="#efefef" /></svg>
              <Pin size={20} strokeWidth={2.5} />
              <X size={22} strokeWidth={3} className="ml-[4px]" />
            </div>
          </div>
          <div className="h-[3px] shrink-0 bg-[#333333]" />
        </div>
      </div>

      {/* TOOLTIP */}
      <div className="absolute left-[684px] top-[241px] w-[522px] h-[214px] bg-[#d3d3d3] border border-[#bdbdbd] shadow-[4px_4px_6px_rgba(0,0,0,0.5)] pl-[29px] pr-[28px]">
        <div className="flex items-end h-[103px] pb-[14px]">
          <ThinWall s={54} />
          <span className="ml-[10px] text-[28px] leading-none text-[#56606c] whitespace-nowrap">薄壁零件转换为钣金</span>
        </div>
        <div className="h-[1px] bg-[#8c8c8c]" />
        <div className="mt-[11px] ml-[4px] text-[21px] leading-[28px] text-[#555]">将统一厚度模型变换为钣金模型。</div>
        <div className="mt-[15px] text-[21px] leading-[28px] text-[#222]">按 F1 获取帮助。</div>
      </div>

      {/* CURSOR */}
      <svg viewBox="0 0 16 24" width="15" height="24" className="absolute left-[773px] top-[164px]">
        <path d="M1 1 L1 19 L5.5 15 L8.5 22 L11.5 21 L8.5 14 L14 14 Z" fill="#fff" stroke="#222" strokeWidth="1" />
      </svg>
    </div>
  )
}
